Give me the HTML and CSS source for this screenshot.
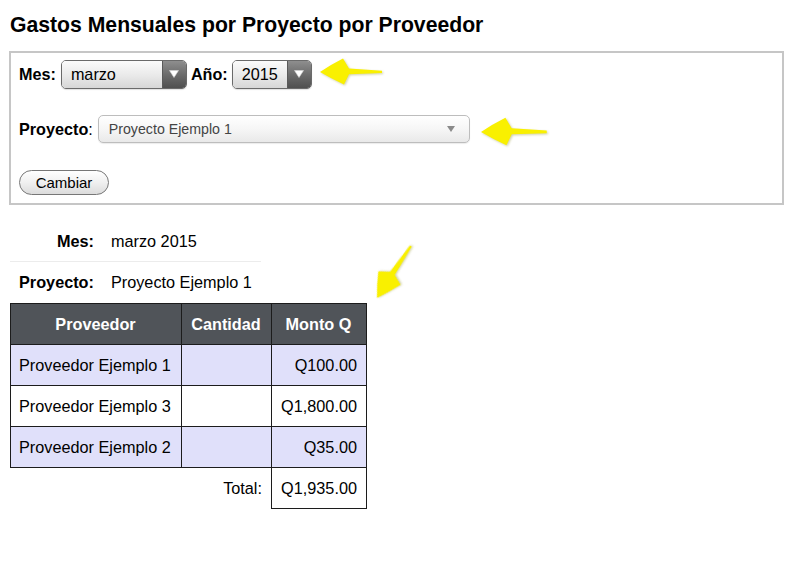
FILE: index.html
```html
<!DOCTYPE html>
<html lang="es">
<head>
<meta charset="utf-8">
<title>Gastos Mensuales por Proyecto por Proveedor</title>
<link rel="stylesheet" href="styles.css">
</head>
<body>
<main class="page">
  <h1 class="title">Gastos Mensuales por Proyecto por Proveedor</h1>

  <form class="filters">
    <div class="row row-period">
      <label class="lbl lbl-mes">Mes:</label>
      <div class="pick pick-mes">
        <span class="pick-val">marzo</span>
        <span class="pick-btn"><svg width="10" height="8" viewBox="0 0 10 8"><polygon points="0.5,0.5 9.5,0.5 5,7.5" fill="#fff" stroke="#d8d8d8" stroke-width="0.6"/></svg></span>
      </div>
      <label class="lbl lbl-anio">Año:</label>
      <div class="pick pick-anio">
        <span class="pick-val">2015</span>
        <span class="pick-btn"><svg width="10" height="8" viewBox="0 0 10 8"><polygon points="0.5,0.5 9.5,0.5 5,7.5" fill="#fff" stroke="#d8d8d8" stroke-width="0.6"/></svg></span>
      </div>
    </div>

    <div class="row row-project">
      <label class="lbl lbl-proyecto"><b>Proyecto</b>:</label>
      <div class="combo">
        <span class="combo-val">Proyecto Ejemplo 1</span>
        <svg class="combo-caret" width="8" height="6" viewBox="0 0 8 6"><polygon points="0,0 8,0 4,6" fill="#8a8a8a"/></svg>
      </div>
    </div>

    <div class="row row-actions">
      <button type="button" class="btn">Cambiar</button>
    </div>
  </form>

  <table class="summary">
    <tr class="summary-first">
      <th>Mes:</th>
      <td>marzo 2015</td>
    </tr>
    <tr>
      <th>Proyecto:</th>
      <td>Proyecto Ejemplo 1</td>
    </tr>
  </table>

  <table class="report">
    <colgroup>
      <col class="c-prov">
      <col class="c-cant">
      <col class="c-monto">
    </colgroup>
    <thead>
      <tr>
        <th>Proveedor</th>
        <th>Cantidad</th>
        <th>Monto Q</th>
      </tr>
    </thead>
    <tbody>
      <tr class="alt">
        <td>Proveedor Ejemplo 1</td>
        <td></td>
        <td class="num">Q100.00</td>
      </tr>
      <tr>
        <td>Proveedor Ejemplo 3</td>
        <td></td>
        <td class="num">Q1,800.00</td>
      </tr>
      <tr class="alt">
        <td>Proveedor Ejemplo 2</td>
        <td></td>
        <td class="num">Q35.00</td>
      </tr>
      <tr class="total">
        <td colspan="2" class="total-lbl">Total:</td>
        <td class="num total-val">Q1,935.00</td>
      </tr>
    </tbody>
  </table>

  <!-- yellow callout arrows drawn over the page -->
  <svg class="marks" width="800" height="569" viewBox="0 0 800 569">
    <defs>
      <path id="arrow" d="M0,0 Q11,-7.5 23,-13.5 L29,-3.5 L62,-1.3 L62,1.1 L29,2.2 L24,12.5 Q11,6.5 0,0 Z"/>
    </defs>
    <use href="#arrow" transform="translate(320 72)" class="mark"/>
    <use href="#arrow" transform="translate(481 132) scale(1.06)" class="mark"/>
    <use href="#arrow" transform="translate(377 298) rotate(-56.8)" class="mark"/>
  </svg>
</main>
</body>
</html>
```

FILE: styles.css
```css
html, body {
  margin: 0;
  background: #fff;
}

body {
  font-family: "Liberation Sans", Arial, Helvetica, sans-serif;
  color: #000;
  font-size: 16px;
}

.page {
  position: relative;
  width: 800px;
  height: 569px;
  padding-left: 9px;
  box-sizing: border-box;
  overflow: hidden;
}

/* heading */
.title {
  margin: 0;
  padding: 13px 0 0 1px;
  font-size: 21.2px;
  line-height: 24px;
  font-weight: bold;
}

/* filter panel */
.filters {
  margin-top: 14px;
  width: 775px;
  height: 154px;
  box-sizing: border-box;
  border: 2px solid #c6c6c6;
  padding: 7px 8px 8px;
}

.row {
  display: flex;
  align-items: center;
}

.row-period {
  height: 29px;
  margin-bottom: 26px;
}

.row-project {
  height: 28px;
  margin-bottom: 27px;
}

.row-actions {
  height: 25px;
}

.lbl {
  font-weight: bold;
  font-size: 16.2px;
  line-height: 19px;
}

.lbl-mes { margin-right: 5px; }
.lbl-anio { margin-right: 4px; }
.lbl-proyecto {
  font-weight: normal;
  margin-right: 5px;
}

/* dark-button popup menus */
.pick {
  display: flex;
  height: 29px;
  box-sizing: border-box;
  border: 1px solid #6a6a6a;
  border-radius: 5px;
  overflow: hidden;
  box-shadow: 0 1px 1px rgba(0, 0, 0, 0.12);
}

.pick-mes { width: 126px; margin-right: 4px; }
.pick-anio { width: 80px; }

.pick-val {
  flex: 1;
  padding-left: 9px;
  font-size: 16.2px;
  line-height: 27px;
  background: linear-gradient(#fbfbfb, #e9e9e9 55%, #d6d6d6);
}

.pick-btn {
  width: 23px;
  display: flex;
  align-items: center;
  justify-content: center;
  border-left: 1px solid #5a5a5a;
  background: linear-gradient(#8e8e8e, #6c6c6c 50%, #4f4f4f);
}

.pick-btn svg {
  display: block;
  margin-top: -1px;
}

/* light combo box */
.combo {
  display: flex;
  align-items: center;
  width: 372px;
  height: 28px;
  box-sizing: border-box;
  border: 1px solid #bdbdbd;
  border-radius: 5px;
  padding: 0 14px 0 10px;
  background: linear-gradient(#ffffff, #f6f6f6 50%, #e9e9e9);
  box-shadow: 0 1px 1px rgba(0, 0, 0, 0.08);
}

.combo-val {
  flex: 1;
  font-size: 14.2px;
  color: #444;
}

.combo-caret {
  display: block;
}

/* pill button */
.btn {
  width: 90px;
  height: 25px;
  padding: 0;
  border: 1px solid #777;
  border-radius: 13px;
  background: linear-gradient(#ffffff, #f0f0f0 50%, #dcdcdc);
  font-family: "Liberation Sans", Arial, Helvetica, sans-serif;
  font-size: 15px;
  color: #000;
}

/* month / project summary */
.summary {
  margin: 16px 0 0 1px;
  border-collapse: collapse;
  font-size: 16.25px;
  line-height: 19px;
}

.summary th,
.summary td {
  padding: 11px 9px;
  text-align: left;
  white-space: nowrap;
}

.summary th {
  text-align: right;
  font-weight: bold;
}

.summary td {
  padding-left: 8px;
}

.summary-first th,
.summary-first td {
  padding-bottom: 10px;
  border-bottom: 1px solid #ececec;
}

/* expenses table */
.report {
  margin-left: 1px;
  border-collapse: collapse;
  table-layout: fixed;
  width: 356px;
  font-size: 16.25px;
  line-height: 19px;
}

.c-prov { width: 171px; }
.c-cant { width: 90px; }
.c-monto { width: 95px; }

.report th,
.report td {
  padding: 11px 9px 10px 8px;
  border: 1px solid #1c1c1c;
  white-space: nowrap;
}

.report th {
  background: #505459;
  color: #fff;
  font-weight: bold;
  text-align: center;
}

.report .alt td {
  background: #e0e0fa;
}

.report .num {
  text-align: right;
}

.report .total-lbl {
  border: none;
  text-align: right;
}

/* callouts */
.marks {
  position: absolute;
  left: 0;
  top: 0;
  pointer-events: none;
}

.mark {
  fill: #f9f000;
  filter: drop-shadow(1px 1px 1px rgba(120, 120, 0, 0.35));
}
```
